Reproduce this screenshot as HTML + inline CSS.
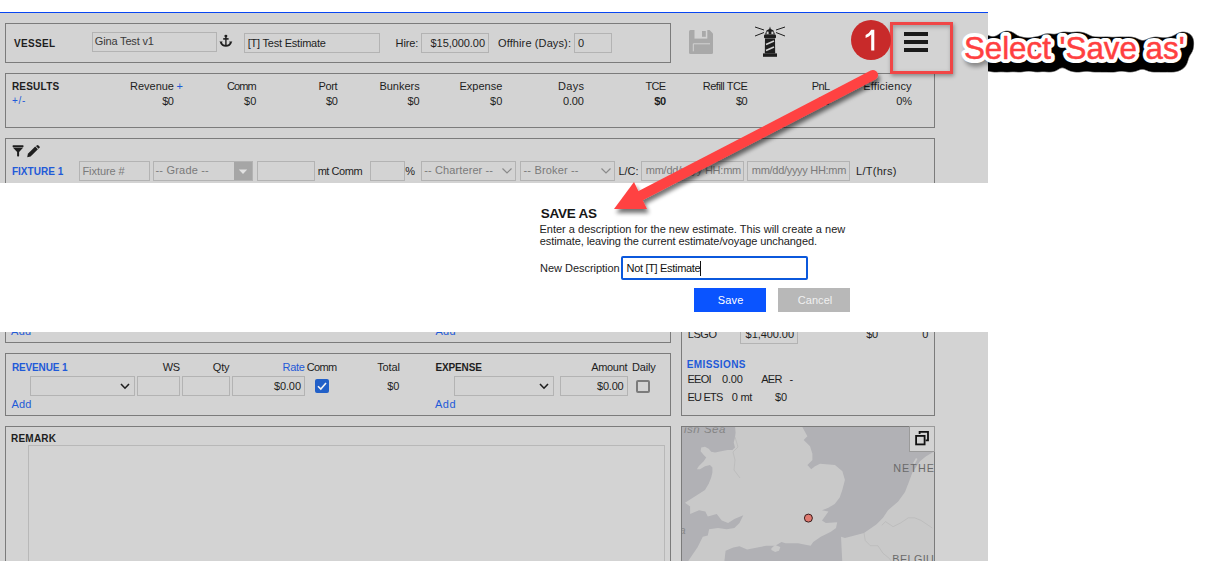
<!DOCTYPE html>
<html><head><meta charset="utf-8"><style>
html,body{margin:0;padding:0;}
body{width:1219px;height:561px;overflow:hidden;position:relative;background:#fff;font-family:"Liberation Sans",sans-serif;}
.r{position:absolute;}
.t{position:absolute;white-space:nowrap;}
</style></head><body>
<div class="r" style="left:0px;top:12px;width:988px;height:1px;background:#0846f2;"></div>
<div class="r" style="left:0px;top:13px;width:988px;height:548px;background:#d3d3d3;"></div>
<div class="r" style="left:5px;top:23px;width:666px;height:40px;border:1px solid #7b7b7b;box-sizing:border-box;"></div>
<div class="t" style="top:39px;left:13.88px;font-size:10px;line-height:10px;font-weight:700;color:#1e1e1e;letter-spacing:0.375px;">VESSEL</div>
<div class="r" style="left:92px;top:32px;width:125px;height:20px;border:1px solid #b3b3b3;box-sizing:border-box;background:transparent;"></div>
<div class="t" style="top:36px;left:94.80px;font-size:11px;line-height:11px;font-weight:400;color:#3a3a3a;letter-spacing:-0.164px;">Gina Test v1</div>
<svg class="r" style="left:219px;top:34px" width="14" height="13" viewBox="0 0 14 13">
<ellipse cx="6.9" cy="2.1" rx="1.5" ry="1.3" fill="#1e1e1e"/>
<g fill="none" stroke="#1e1e1e"><path d="M6.9 3V11.4" stroke-width="1.4"/><path d="M4.2 4.9H9.6" stroke-width="1.6"/><path d="M1.8 8.2Q3 11.8 6.9 11.8Q10.8 11.8 12 8.2" stroke-width="1.9"/></g>
<path d="M0.4 7.6L3.6 7.4L2.4 10Z M13.4 7.6L10.2 7.4L11.4 10Z" fill="#1e1e1e"/>
</svg>
<div class="r" style="left:244px;top:33px;width:136px;height:20px;border:1px solid #b3b3b3;box-sizing:border-box;background:transparent;"></div>
<div class="t" style="top:38px;left:247.65px;font-size:11px;line-height:11px;font-weight:400;color:#1e1e1e;letter-spacing:-0.213px;">[T] Test Estimate</div>
<div class="t" style="top:38px;left:395.62px;font-size:11px;line-height:11px;font-weight:400;color:#1e1e1e;letter-spacing:-0.119px;">Hire:</div>
<div class="r" style="left:421px;top:33px;width:68px;height:20px;border:1px solid #b3b3b3;box-sizing:border-box;background:transparent;"></div>
<div class="t" style="top:38px;left:430.57px;font-size:11px;line-height:11px;font-weight:400;color:#1e1e1e;letter-spacing:-0.067px;">$15,000.00</div>
<div class="t" style="top:38px;left:498.00px;font-size:11px;line-height:11px;font-weight:400;color:#1e1e1e;letter-spacing:0.116px;">Offhire (Days):</div>
<div class="r" style="left:574px;top:33px;width:38px;height:20px;border:1px solid #b3b3b3;box-sizing:border-box;background:transparent;"></div>
<div class="t" style="top:38px;left:578.12px;font-size:11px;line-height:11px;font-weight:400;color:#1e1e1e;letter-spacing:0.000px;">0</div>
<svg class="r" style="left:689px;top:30px" width="24" height="24" viewBox="0 0 24 24">
<path d="M1.5 0H20.5L24 3.5V22.5Q24 24 22.5 24H1.5Q0 24 0 22.5V1.5Q0 0 1.5 0Z" fill="#a9a9a9"/>
<rect x="5.5" y="0" width="12.8" height="8.6" fill="#d3d3d3"/>
<rect x="13" y="1" width="3.8" height="5.8" fill="#a9a9a9"/>
<path d="M4.3 21.3V13.8H21" fill="none" stroke="#d3d3d3" stroke-width="1"/>
</svg>
<svg class="r" style="left:754px;top:26px" width="32" height="32" viewBox="0 0 32 32">
<g stroke="#1e1e1e" stroke-width="1" fill="none"><path d="M1 1L10 4M1 10L10 6.5M31 1L22 4M31 10L22 6.5"/></g>
<path d="M16 0.5L16.8 3L19.5 4.5L21 8.5H11L12.5 4.5L15.2 3Z" fill="#1e1e1e"/>
<rect x="12.6" y="5.6" width="2" height="2.6" fill="#d3d3d3"/><rect x="17.4" y="5.6" width="2" height="2.6" fill="#d3d3d3"/>
<rect x="10" y="8.6" width="12" height="3.6" rx="1" fill="#1e1e1e"/>
<path d="M11 12.6H21L21.2 27.5H10.8Z" fill="#1e1e1e"/>
<path d="M12 18.5L20 15M12 24.5L20 21" stroke="#d3d3d3" stroke-width="1.6"/>
<rect x="9" y="27.4" width="14" height="3.4" fill="#1e1e1e"/>
</svg>
<div class="r" style="left:904px;top:32px;width:24px;height:4px;background:#1a1a1a;"></div>
<div class="r" style="left:904px;top:40px;width:24px;height:4px;background:#1a1a1a;"></div>
<div class="r" style="left:904px;top:48px;width:24px;height:4px;background:#1a1a1a;"></div>
<div class="r" style="left:5px;top:73px;width:930px;height:55px;border:1px solid #7b7b7b;box-sizing:border-box;"></div>
<div class="t" style="top:82px;left:11.88px;font-size:10px;line-height:10px;font-weight:700;color:#1e1e1e;letter-spacing:0.221px;">RESULTS</div>
<div class="t" style="top:96px;left:12.00px;font-size:10px;line-height:10px;font-weight:400;color:#1f5ad8;letter-spacing:0.750px;">+/-</div>
<div class="t" style="top:81px;left:130.12px;font-size:11px;line-height:11px;font-weight:400;color:#1e1e1e;letter-spacing:-0.037px;">Revenue</div>
<div class="t" style="top:81px;left:226.90px;font-size:11px;line-height:11px;font-weight:400;color:#1e1e1e;letter-spacing:-0.883px;">Comm</div>
<div class="t" style="top:81px;left:318.62px;font-size:11px;line-height:11px;font-weight:400;color:#1e1e1e;letter-spacing:-0.383px;">Port</div>
<div class="t" style="top:81px;left:379.43px;font-size:11px;line-height:11px;font-weight:400;color:#1e1e1e;letter-spacing:-0.021px;">Bunkers</div>
<div class="t" style="top:81px;left:459.43px;font-size:11px;line-height:11px;font-weight:400;color:#1e1e1e;letter-spacing:0.017px;">Expense</div>
<div class="t" style="top:81px;left:558.12px;font-size:11px;line-height:11px;font-weight:400;color:#1e1e1e;letter-spacing:0.283px;">Days</div>
<div class="t" style="top:81px;left:645.55px;font-size:11px;line-height:11px;font-weight:400;color:#1e1e1e;letter-spacing:-0.675px;">TCE</div>
<div class="t" style="top:81px;left:702.73px;font-size:11px;line-height:11px;font-weight:400;color:#1e1e1e;letter-spacing:-0.478px;">Refill TCE</div>
<div class="t" style="top:81px;left:811.73px;font-size:11px;line-height:11px;font-weight:400;color:#1e1e1e;letter-spacing:-0.637px;">PnL</div>
<div class="t" style="top:81px;left:863.23px;font-size:11px;line-height:11px;font-weight:400;color:#1e1e1e;letter-spacing:0.167px;">Efficiency</div>
<div class="t" style="top:81px;left:176.50px;font-size:11px;line-height:11px;font-weight:400;color:#1f5ad8;letter-spacing:0.000px;">+</div>
<div class="t" style="top:96px;left:162.28px;font-size:11px;line-height:11px;font-weight:400;color:#1e1e1e;letter-spacing:-0.750px;">$0</div>
<div class="t" style="top:96px;left:244.07px;font-size:11px;line-height:11px;font-weight:400;color:#1e1e1e;letter-spacing:0.050px;">$0</div>
<div class="t" style="top:96px;left:325.88px;font-size:11px;line-height:11px;font-weight:400;color:#1e1e1e;letter-spacing:-0.150px;">$0</div>
<div class="t" style="top:96px;left:407.57px;font-size:11px;line-height:11px;font-weight:400;color:#1e1e1e;letter-spacing:-0.150px;">$0</div>
<div class="t" style="top:96px;left:489.98px;font-size:11px;line-height:11px;font-weight:400;color:#1e1e1e;letter-spacing:0.050px;">$0</div>
<div class="t" style="top:96px;left:562.92px;font-size:11px;line-height:11px;font-weight:400;color:#1e1e1e;letter-spacing:-0.108px;">0.00</div>
<div class="t" style="top:96px;left:654.17px;font-size:11px;line-height:11px;font-weight:700;color:#1e1e1e;letter-spacing:-0.225px;">$0</div>
<div class="t" style="top:96px;left:735.98px;font-size:11px;line-height:11px;font-weight:400;color:#1e1e1e;letter-spacing:-0.550px;">$0</div>
<div class="t" style="top:96px;left:818.38px;font-size:11px;line-height:11px;font-weight:400;color:#1e1e1e;letter-spacing:-0.550px;">$0</div>
<div class="t" style="top:96px;left:896.23px;font-size:11px;line-height:11px;font-weight:400;color:#1e1e1e;letter-spacing:-0.125px;">0%</div>
<div class="r" style="left:5px;top:138px;width:930px;height:163px;border:1px solid #7b7b7b;box-sizing:border-box;"></div>
<svg class="r" style="left:12px;top:145px" width="12" height="13" viewBox="0 0 12 13">
<rect x="0.6" y="0.3" width="10.9" height="1.6" rx="0.5" fill="#1e1e1e"/>
<path d="M0.8 2.5H11.3L7.1 6.9V10.9Q6.1 11.9 5.1 10.9V6.9Z" fill="#1e1e1e"/>
</svg>
<svg class="r" style="left:27px;top:145px" width="14" height="13" viewBox="0 0 14 13">
<path d="M0.2 12.2L0.9 8.7L8.2 1.6L10.9 4.3L3.6 11.4Z" fill="#1e1e1e"/>
<path d="M8.9 1L11.6 3.7L12.7 2.6Q13.1 2.1 12.7 1.7L11.2 0.2Q10.7 -0.2 10.3 0.2Z" fill="#1e1e1e"/>
</svg>
<div class="t" style="top:167px;left:11.88px;font-size:10px;line-height:10px;font-weight:700;color:#1f5ad8;letter-spacing:0.031px;">FIXTURE 1</div>
<div class="r" style="left:79px;top:161px;width:71px;height:20px;border:1px solid #b3b3b3;box-sizing:border-box;background:transparent;"></div>
<div class="t" style="top:166px;left:82.42px;font-size:11px;line-height:11px;font-weight:400;color:#7a7a7a;letter-spacing:-0.059px;">Fixture #</div>
<div class="r" style="left:153px;top:161px;width:100px;height:20px;border:1px solid #b3b3b3;box-sizing:border-box;background:transparent;"></div>
<div class="r" style="left:234px;top:162px;width:18px;height:18px;background:#a6a6a6;"></div>
<svg class="r" style="left:238px;top:169px" width="10" height="6" viewBox="0 0 10 6"><path d="M0.8 0.5H9.2L5 5Z" fill="#e2e2e2"/></svg>
<div class="t" style="top:165px;left:155.50px;font-size:11px;line-height:11px;font-weight:400;color:#7a7a7a;letter-spacing:0.195px;">-- Grade --</div>
<div class="r" style="left:257px;top:161px;width:58px;height:20px;border:1px solid #b3b3b3;box-sizing:border-box;background:transparent;"></div>
<div class="t" style="top:166px;left:317.65px;font-size:11px;line-height:11px;font-weight:400;color:#1e1e1e;letter-spacing:-0.442px;">mt Comm</div>
<div class="r" style="left:370px;top:161px;width:35px;height:20px;border:1px solid #b3b3b3;box-sizing:border-box;background:transparent;"></div>
<div class="t" style="top:166px;left:405.32px;font-size:11px;line-height:11px;font-weight:400;color:#1e1e1e;letter-spacing:0.000px;">%</div>
<div class="r" style="left:421px;top:161px;width:95px;height:20px;border:1px solid #b3b3b3;box-sizing:border-box;background:transparent;"></div>
<div class="t" style="top:165px;left:424.30px;font-size:11px;line-height:11px;font-weight:400;color:#7a7a7a;letter-spacing:0.104px;">-- Charterer --</div>
<svg class="r" style="left:502px;top:168px" width="10" height="6" viewBox="0 0 10 6"><path d="M0.5 0.5L5 5L9.5 0.5" fill="none" stroke="#8a8a8a" stroke-width="1.2"/></svg>
<div class="r" style="left:520px;top:161px;width:95px;height:20px;border:1px solid #b3b3b3;box-sizing:border-box;background:transparent;"></div>
<div class="t" style="top:165px;left:523.50px;font-size:11px;line-height:11px;font-weight:400;color:#7a7a7a;letter-spacing:0.170px;">-- Broker --</div>
<svg class="r" style="left:601px;top:168px" width="10" height="6" viewBox="0 0 10 6"><path d="M0.5 0.5L5 5L9.5 0.5" fill="none" stroke="#8a8a8a" stroke-width="1.2"/></svg>
<div class="t" style="top:166px;left:618.42px;font-size:11px;line-height:11px;font-weight:400;color:#1e1e1e;letter-spacing:0.008px;">L/C:</div>
<div class="r" style="left:641px;top:161px;width:103px;height:20px;border:1px solid #b3b3b3;box-sizing:border-box;background:transparent;"></div>
<div class="t" style="top:165px;left:645.75px;font-size:11px;line-height:11px;font-weight:400;color:#7a7a7a;letter-spacing:-0.235px;">mm/dd/yyyy HH:mm</div>
<div class="r" style="left:747px;top:161px;width:103px;height:20px;border:1px solid #b3b3b3;box-sizing:border-box;background:transparent;"></div>
<div class="t" style="top:165px;left:751.85px;font-size:11px;line-height:11px;font-weight:400;color:#7a7a7a;letter-spacing:-0.302px;">mm/dd/yyyy HH:mm</div>
<div class="t" style="top:166px;left:856.12px;font-size:11px;line-height:11px;font-weight:400;color:#1e1e1e;letter-spacing:0.257px;">L/T(hrs)</div>
<div class="r" style="left:5px;top:200px;width:666px;height:143px;border:1px solid #7b7b7b;box-sizing:border-box;"></div>
<div class="t" style="top:326px;left:11.00px;font-size:11px;line-height:11px;font-weight:400;color:#1f5ad8;letter-spacing:0.312px;">Add</div>
<div class="t" style="top:326px;left:435.40px;font-size:11px;line-height:11px;font-weight:400;color:#1f5ad8;letter-spacing:0.363px;">Add</div>
<div class="r" style="left:681px;top:200px;width:254px;height:216px;border:1px solid #7b7b7b;box-sizing:border-box;"></div>
<div class="t" style="top:329px;left:687.73px;font-size:11px;line-height:11px;font-weight:400;color:#1e1e1e;letter-spacing:-0.442px;">LSGO</div>
<div class="r" style="left:740px;top:324px;width:58px;height:20px;border:1px solid #b3b3b3;box-sizing:border-box;background:transparent;"></div>
<div class="t" style="top:329px;left:745.58px;font-size:11px;line-height:11px;font-weight:400;color:#1e1e1e;letter-spacing:-0.062px;">$1,400.00</div>
<div class="t" style="top:329px;left:866.17px;font-size:11px;line-height:11px;font-weight:400;color:#1e1e1e;letter-spacing:-0.350px;">$0</div>
<div class="t" style="top:329px;left:922.33px;font-size:11px;line-height:11px;font-weight:400;color:#1e1e1e;letter-spacing:0.000px;">0</div>
<div class="t" style="top:360px;left:686.77px;font-size:10px;line-height:10px;font-weight:700;color:#1f5ad8;letter-spacing:0.388px;">EMISSIONS</div>
<div class="t" style="top:374px;left:687.52px;font-size:11px;line-height:11px;font-weight:400;color:#1e1e1e;letter-spacing:-0.758px;">EEOI</div>
<div class="t" style="top:374px;left:721.92px;font-size:11px;line-height:11px;font-weight:400;color:#1e1e1e;letter-spacing:-0.142px;">0.00</div>
<div class="t" style="top:374px;left:761.20px;font-size:11px;line-height:11px;font-weight:400;color:#1e1e1e;letter-spacing:-0.650px;">AER</div>
<div class="t" style="top:374px;left:789.50px;font-size:11px;line-height:11px;font-weight:400;color:#1e1e1e;letter-spacing:0.000px;">-</div>
<div class="t" style="top:392px;left:687.52px;font-size:11px;line-height:11px;font-weight:400;color:#1e1e1e;letter-spacing:-0.795px;">EU ETS</div>
<div class="t" style="top:392px;left:731.83px;font-size:11px;line-height:11px;font-weight:400;color:#1e1e1e;letter-spacing:-0.300px;">0 mt</div>
<div class="t" style="top:392px;left:774.88px;font-size:11px;line-height:11px;font-weight:400;color:#1e1e1e;letter-spacing:0.050px;">$0</div>
<div class="r" style="left:5px;top:353px;width:666px;height:63px;border:1px solid #7b7b7b;box-sizing:border-box;"></div>
<div class="t" style="top:363px;left:11.88px;font-size:10px;line-height:10px;font-weight:700;color:#1f5ad8;letter-spacing:-0.131px;">REVENUE 1</div>
<div class="t" style="top:362px;left:162.80px;font-size:11px;line-height:11px;font-weight:400;color:#1e1e1e;letter-spacing:-0.550px;">WS</div>
<div class="t" style="top:362px;left:212.80px;font-size:11px;line-height:11px;font-weight:400;color:#1e1e1e;letter-spacing:-0.213px;">Qty</div>
<div class="t" style="top:362px;left:282.62px;font-size:11px;line-height:11px;font-weight:400;color:#1f5ad8;letter-spacing:-0.325px;">Rate</div>
<div class="t" style="top:362px;left:306.80px;font-size:11px;line-height:11px;font-weight:400;color:#1e1e1e;letter-spacing:-0.683px;">Comm</div>
<div class="t" style="top:362px;left:377.15px;font-size:11px;line-height:11px;font-weight:400;color:#1e1e1e;letter-spacing:-0.087px;">Total</div>
<div class="r" style="left:30px;top:376px;width:105px;height:20px;border:1px solid #b3b3b3;box-sizing:border-box;background:transparent;"></div>
<svg class="r" style="left:120px;top:383px" width="10" height="7" viewBox="0 0 10 7"><path d="M1 1L5 5.2L9 1" fill="none" stroke="#1e1e1e" stroke-width="1.6"/></svg>
<div class="r" style="left:137px;top:376px;width:43px;height:20px;border:1px solid #b3b3b3;box-sizing:border-box;background:transparent;"></div>
<div class="r" style="left:182px;top:376px;width:48px;height:20px;border:1px solid #b3b3b3;box-sizing:border-box;background:transparent;"></div>
<div class="r" style="left:232px;top:376px;width:73px;height:20px;border:1px solid #b3b3b3;box-sizing:border-box;background:transparent;"></div>
<div class="t" style="top:381px;left:273.88px;font-size:11px;line-height:11px;font-weight:400;color:#1e1e1e;letter-spacing:-0.100px;">$0.00</div>
<div class="r" style="left:315px;top:379px;width:14px;height:14px;background:#2260c8;border-radius:2px;"></div>
<svg class="r" style="left:315px;top:379px" width="14" height="14" viewBox="0 0 14 14"><path d="M3 7.2L5.8 10L11 4" fill="none" stroke="#f4f4f4" stroke-width="1.6"/></svg>
<div class="t" style="top:381px;left:387.27px;font-size:11px;line-height:11px;font-weight:400;color:#1e1e1e;letter-spacing:-0.150px;">$0</div>
<div class="t" style="top:399px;left:11.40px;font-size:11px;line-height:11px;font-weight:400;color:#1f5ad8;letter-spacing:0.212px;">Add</div>
<div class="t" style="top:363px;left:435.38px;font-size:10px;line-height:10px;font-weight:700;color:#1e1e1e;letter-spacing:-0.108px;">EXPENSE</div>
<div class="t" style="top:362px;left:591.20px;font-size:11px;line-height:11px;font-weight:400;color:#1e1e1e;letter-spacing:-0.315px;">Amount</div>
<div class="t" style="top:362px;left:632.12px;font-size:11px;line-height:11px;font-weight:400;color:#1e1e1e;letter-spacing:-0.181px;">Daily</div>
<div class="r" style="left:454px;top:376px;width:100px;height:20px;border:1px solid #b3b3b3;box-sizing:border-box;background:transparent;"></div>
<svg class="r" style="left:539px;top:383px" width="10" height="7" viewBox="0 0 10 7"><path d="M1 1L5 5.2L9 1" fill="none" stroke="#1e1e1e" stroke-width="1.6"/></svg>
<div class="r" style="left:560px;top:376px;width:68px;height:20px;border:1px solid #b3b3b3;box-sizing:border-box;background:transparent;"></div>
<div class="t" style="top:381px;left:597.08px;font-size:11px;line-height:11px;font-weight:400;color:#1e1e1e;letter-spacing:-0.225px;">$0.00</div>
<div class="r" style="left:636px;top:380px;width:14px;height:13px;border:2px solid #7b7b7b;border-radius:2px;box-sizing:border-box;"></div>
<div class="t" style="top:399px;left:435.00px;font-size:11px;line-height:11px;font-weight:400;color:#1f5ad8;letter-spacing:0.463px;">Add</div>
<div class="r" style="left:5px;top:426px;width:666px;height:175px;border:1px solid #7b7b7b;box-sizing:border-box;"></div>
<div class="t" style="top:434px;left:10.97px;font-size:10px;line-height:10px;font-weight:700;color:#1e1e1e;letter-spacing:0.235px;">REMARK</div>
<div class="r" style="left:28px;top:445px;width:637px;height:156px;border:1px solid #b8b8b8;box-sizing:border-box;background:transparent;"></div>
<svg class="r" style="left:681px;top:426px" width="254" height="135" viewBox="681 426 254 135">
<rect x="681" y="426" width="254" height="135" fill="#b1b1b5"/>
<g fill="#c9c9c9">
<defs><clipPath id="mclip"><rect x="682" y="427.5" width="252" height="134"/></clipPath></defs>
<path d="M735,426 L735.6,432.5 L735,437.5 L733.7,442.5 L735,447.5 L732.4,450 L727.4,450 L721.2,451.2 L715,452.5 L711.2,451.8 L708.7,448.7 L705,446.8 L701.2,447.5 L700.6,451.2 L703.7,455 L706.2,457.5 L703.7,461.2 L698.7,466.2 L696.9,469.3 L700,469.3 L705,466.2 L710,465 L712.4,467.4 L712.4,472.4 L711.2,477.4 L708.7,483.7 L705,490 L685,502.7 L690.1,506.5 L690.1,514 L699,510.3 L705.3,511.5 L707.8,516.6 L716.7,514 L721.8,520.4 L728.1,522.9 L734.4,519.1 L743.3,515.3 L739.5,522.9 L734.4,528 L726.8,529.2 L718,528 L709.1,529.2 L707.8,535.6 L702.8,536.8 L697.7,547 L687.6,562 L724.3,562 L725.6,550.8 L733.2,547.6 L739.5,546.3 L747.1,549.5 L760,547 L766.3,545.7 L775.2,545.7 L781.5,541.9 L785.3,543.2 L798,543.2 L810.6,545.7 L813.2,541.9 L820.8,536.8 L830.9,531.8 L836,528 L837.2,522.3 L825.8,522.9 L822,520.4 L825.8,515.3 L828.4,511.5 L822,510.3 L828.4,507.7 L834.7,503.9 L839.7,497.6 L842.3,490 L844.9,480 L842.4,471.2 L835,465 L820,463.7 L815,466.2 L811.2,469.3 L807.4,465 L812.4,460 L812.4,453.7 L810,446.2 L803.7,440 L807.4,436.2 L801.8,426 Z"/>
<path d="M842.3,562 L841,536.8 L845,538.1 L864,533 L876.6,524.2 L883,517.8 L888,510.2 L898.2,501.4 L905,492 L908.7,482.4 L912.4,472.4 L919.9,461.2 L926.1,456.2 L935,451 L935,562 Z"/>
<path d="M771.4,548.2 L775.2,545 L780.3,547 L779,550.8 L775.2,552 L771.4,550.1 Z"/>
<path d="M913,463 L916,458 L917.5,459 L914.5,464.5 Z"/>
<g fill="none" stroke="#bababa" stroke-width="0.8"><path d="M881.7,525.4 L885.5,521.6 L893.1,526.7 L900.7,522.9 L908.3,517.8 L914.6,517.8 L921,520.4 L932.3,528"/><path d="M864,533 L865.3,540.6 L870.3,545.7 L877.9,545.7 L883,553.3 L889.3,558.4 L891.8,562"/><path d="M735,437 L738,447 L733,452 L735,460 L734,470 L740,478"/></g>
<g clip-path="url(#mclip)"><text x="684" y="433" font-family="Liberation Sans" font-style="italic" font-size="11.5" letter-spacing="0.5" fill="#858585">ish Sea</text><text x="679.5" y="534" font-family="Liberation Sans" font-style="italic" font-size="11" fill="#8a8a8a">a</text></g>
<text x="893.3" y="472" font-family="Liberation Sans" font-size="10.8" letter-spacing="1.0" fill="#6a6a6a">NETHERLANDS</text>
<text x="892.3" y="562.5" font-family="Liberation Sans" font-size="10.8" letter-spacing="0.4" fill="#6a6a6a">BELGIUM</text>
<circle cx="808.4" cy="518.1" r="4" fill="#e07a70" stroke="#3a1c1c" stroke-width="1"/>

</g>
<rect x="681.5" y="426.5" width="253" height="140" fill="none" stroke="#7b7b7b"/>
</svg>
<div class="r" style="left:909px;top:426px;width:26px;height:26px;background:#d3d3d3;border:1px solid #9a9a9a;box-sizing:border-box;"></div>
<svg class="r" style="left:909px;top:426px" width="26" height="26" viewBox="909 426 26 26">
<g fill="none" stroke="#111" stroke-width="1.8"><path d="M919.6 434V431.9H928V440.3H925.6"/><rect x="916.1" y="435.9" width="8.5" height="8.5"/></g>
</svg>
<div class="r" style="left:0px;top:183px;width:1219px;height:149px;background:#fff;"></div>
<div class="t" style="top:207px;left:540.73px;font-size:13.5px;line-height:13.5px;font-weight:700;color:#161616;letter-spacing:-0.229px;">SAVE AS</div>
<div class="t" style="top:224px;left:539.42px;font-size:11px;line-height:11px;font-weight:400;color:#222;letter-spacing:0.015px;">Enter a description for the new estimate. This will create a new</div>
<div class="t" style="top:236px;left:539.80px;font-size:11px;line-height:11px;font-weight:400;color:#222;letter-spacing:-0.085px;">estimate, leaving the current estimate/voyage unchanged.</div>
<div class="t" style="top:263px;left:540.12px;font-size:11px;line-height:11px;font-weight:400;color:#222;letter-spacing:-0.036px;">New Description</div>
<div class="r" style="left:621px;top:256px;width:187px;height:24px;border:2px solid #0b58dc;border-radius:2px;box-sizing:border-box;background:#fff;"></div>
<div class="t" style="top:263px;left:626.52px;font-size:11px;line-height:11px;font-weight:400;color:#111;letter-spacing:-0.313px;">Not [T] Estimate</div>
<div class="r" style="left:700px;top:261px;width:1px;height:15px;background:#111;"></div>
<div class="r" style="left:694px;top:288px;width:72px;height:24px;background:#0a54ff;"></div>
<div class="t" style="top:295px;left:717.80px;font-size:11px;line-height:11px;font-weight:400;color:#fff;letter-spacing:0.158px;">Save</div>
<div class="r" style="left:778px;top:288px;width:72px;height:24px;background:#b8b8b8;"></div>
<div class="t" style="top:295px;left:797.80px;font-size:11px;line-height:11px;font-weight:400;color:#f0f0f0;letter-spacing:0.040px;">Cancel</div>
<div class="r" style="left:890px;top:22px;width:63px;height:52px;border:3px solid #f04646;box-sizing:border-box;box-shadow:1px 2px 4px rgba(0,0,0,0.35), inset 1px 2px 4px rgba(0,0,0,0.25);"></div>
<div class="r" style="left:851px;top:20px;width:40px;height:40px;background:#c82a2a;border-radius:50%;"></div>
<svg class="r" style="left:851px;top:20px" width="40" height="40" viewBox="851 20 40 40"><path d="M871.2 29.8H874.3V50.6H871.2V34.4Q869.2 36.4 865.6 37.9V35.1Q869.6 33.2 871.2 29.8Z" fill="#fff"/></svg>
<svg class="r" style="left:0;top:0" width="1219" height="561" viewBox="0 0 1219 561">
<defs><filter id="sh" x="-20%" y="-20%" width="140%" height="140%"><feGaussianBlur in="SourceAlpha" stdDeviation="2"/><feOffset dx="2" dy="4"/><feComponentTransfer><feFuncA type="linear" slope="0.55"/></feComponentTransfer><feMerge><feMergeNode/><feMergeNode in="SourceGraphic"/></feMerge></filter></defs>
<g filter="url(#sh)">
<line x1="873" y1="75" x2="638" y2="197" stroke="#ff4242" stroke-width="10" stroke-linecap="round"/>
<path d="M614 209L634 182L647 209Z" fill="#ff4242"/>
</g>
</svg>
<svg class="r" style="left:0;top:0" width="1219" height="561" viewBox="0 0 1219 561">
<defs><clipPath id="cw"><rect x="988" y="0" width="231" height="561"/></clipPath>
<filter id="sh2" x="-10%" y="-30%" width="120%" height="160%"><feGaussianBlur stdDeviation="2"/></filter><filter id="th" x="-10%" y="-40%" width="120%" height="180%"><feGaussianBlur stdDeviation="3"/><feComponentTransfer><feFuncA type="linear" slope="6" intercept="-2.2"/></feComponentTransfer></filter></defs>
<g font-family="Liberation Sans" font-size="31.3" stroke-linejoin="round">
<text x="966" y="64" fill="#000" stroke="#000" stroke-width="6" opacity="0.35" filter="url(#sh2)">Select 'Save as'</text>
<g clip-path="url(#cw)"><text x="965.5" y="63" fill="#000" stroke="#000" stroke-width="18" filter="url(#th)">Select 'Save as'</text></g>
<text x="963.9" y="59" fill="#fff" stroke="#fff" stroke-width="8">Select 'Save as'</text>
<text x="963.9" y="59" fill="#ff4040" stroke="#ff4040" stroke-width="0.5">Select 'Save as'</text>
</g></svg>
</body></html>
